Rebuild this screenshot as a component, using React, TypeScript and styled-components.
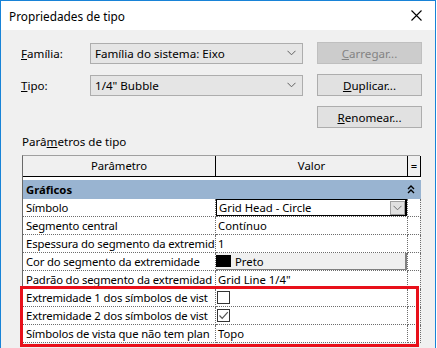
import { FC } from "react";
import styled, { createGlobalStyle } from "styled-components";

const GlobalStyle = createGlobalStyle`
  html, body {
    margin: 0;
    padding: 0;
    background: #ffffff;
  }
  body {
    font-family: "Noto Sans", "Open Sans", sans-serif;
    font-size: 11.6px;
    color: #000000;
  }
`;

const Chevron: FC<{ color?: string }> = ({ color = "#606060" }) => (
  <svg width="9" height="6" viewBox="0 0 9 6">
    <path d="M0.5 0.8 L4.5 4.8 L8.5 0.8" fill="none" stroke={color} strokeWidth="1" />
  </svg>
);

const CloseIcon: FC = () => (
  <svg width="11" height="11" viewBox="0 0 11 11">
    <path d="M0.5 0.5 L10.5 10.5 M10.5 0.5 L0.5 10.5" stroke="#000" strokeWidth="1.1" />
  </svg>
);

const CollapseIcon: FC = () => (
  <svg width="8" height="9" viewBox="0 0 8 9">
    <path d="M1 4 L4 1 L7 4 M1 8 L4 5 L7 8" fill="none" stroke="#000" strokeWidth="1.4" />
  </svg>
);

const CheckIcon: FC = () => (
  <svg width="11" height="11" viewBox="0 0 11 11">
    <path d="M1.5 5.5 L4.2 8.3 L9.8 2.2" fill="none" stroke="#555" strokeWidth="1.2" />
  </svg>
);

interface IParam {
  name: string;
  value: "text" | "combo" | "color" | "checkbox";
  text?: string;
  checked?: boolean;
}

// names as the narrow column shows them
const params: IParam[] = [
  { name: "Símbolo", value: "combo", text: "Grid Head - Circle" },
  { name: "Segmento central", value: "text", text: "Contínuo" },
  { name: "Espessura do segmento da extremid", value: "text", text: "1" },
  { name: "Cor do segmento da extremidade", value: "color", text: "Preto" },
  { name: "Padrão do segmento da extremidad", value: "text", text: "Grid Line 1/4\"" },
  { name: "Extremidade 1 dos símbolos de vist", value: "checkbox", checked: false },
  { name: "Extremidade 2 dos símbolos de vist", value: "checkbox", checked: true },
  { name: "Símbolos de vista que não tem plan", value: "text", text: "Topo" },
];

const App: FC = () => {
  return (
    <>
      <GlobalStyle />
      <Window>
        <TitleBar>
          <Title>Propriedades de tipo</Title>
          <CloseButton>
            <CloseIcon />
          </CloseButton>
        </TitleBar>
        <Body>
          <FormRow>
            <Label>
              <u>F</u>amília:
            </Label>
            <Combo>
              <span>Família do sistema: Eixo</span>
              <Chevron />
            </Combo>
            <Button $disabled>
              <u>C</u>arregar...
            </Button>
          </FormRow>
          <FormRow>
            <Label>
              <u>T</u>ipo:
            </Label>
            <Combo>
              <span>1/4" Bubble</span>
              <Chevron />
            </Combo>
            <Button>
              <u>D</u>uplicar...
            </Button>
          </FormRow>
          <FormRow>
            <Spacer />
            <Button>
              <u>R</u>enomear...
            </Button>
          </FormRow>

          <SectionLabel>
            Parâ<u>m</u>etros de tipo
          </SectionLabel>

          <TableWrap>
            <Grid>
              <HeadCell>Parâmetro</HeadCell>
              <HeadCell>Valor</HeadCell>
              <HeadCell>=</HeadCell>

              <GroupCell>
                <span>Gráficos</span>
                <CollapseIcon />
              </GroupCell>

              {params.map((p) => (
                <Row key={p.name}>
                  <NameCell>
                    <Clip>{p.name}</Clip>
                  </NameCell>
                  <ValueCell>
                    {p.value === "text" && <CellText>{p.text}</CellText>}
                    {p.value === "combo" && (
                      <CellCombo>
                        <CellText>{p.text}</CellText>
                        <DropButton>
                          <Chevron color="#707070" />
                        </DropButton>
                      </CellCombo>
                    )}
                    {p.value === "color" && (
                      <ColorButton>
                        <Swatch />
                        <span>{p.text}</span>
                      </ColorButton>
                    )}
                    {p.value === "checkbox" && (
                      <Checkbox>{p.checked && <CheckIcon />}</Checkbox>
                    )}
                  </ValueCell>
                  <EqCell />
                </Row>
              ))}
            </Grid>
            <Highlight />
          </TableWrap>
        </Body>
      </Window>
    </>
  );
};

const Window = styled.div`
  width: 436px;
  height: 348px;
  box-sizing: border-box;
  border: 1px solid #1883d7;
  border-bottom: none;
  background: #f0f0f0;
  overflow: hidden;
  display: flex;
  flex-direction: column;
`;

const TitleBar = styled.div`
  height: 29px;
  background: #ffffff;
  display: flex;
  align-items: center;
  justify-content: space-between;
  padding: 0 9px 0 8px;
  flex-shrink: 0;
`;

const Title = styled.span`
  font-size: 11.8px;
  color: #000;
`;

const CloseButton = styled.div`
  width: 16px;
  height: 16px;
  display: flex;
  align-items: center;
  justify-content: center;
  margin-right: 2px;
`;

const Body = styled.div`
  padding: 12px 0 0 20px;
  display: flex;
  flex-direction: column;
`;

const FormRow = styled.div`
  display: flex;
  align-items: center;
  height: 22px;
  margin-bottom: 10px;

  &:nth-child(3) {
    margin-bottom: 0;
  }
`;

const Label = styled.label`
  width: 69px;
  flex-shrink: 0;
`;

const Spacer = styled.div`
  width: 296px;
  flex-shrink: 0;
`;

const Combo = styled.div`
  width: 213px;
  height: 21px;
  box-sizing: border-box;
  border: 1px solid #adadad;
  background: #e5e5e5;
  display: flex;
  align-items: center;
  justify-content: space-between;
  padding: 0 6px 0 4px;
  margin-right: 14px;
  flex-shrink: 0;
`;

const Button = styled.div<{ $disabled?: boolean }>`
  width: 105px;
  height: 22px;
  box-sizing: border-box;
  border: 1px solid ${(p) => (p.$disabled ? "#bfbfbf" : "#adadad")};
  background: ${(p) => (p.$disabled ? "#cccccc" : "#e1e1e1")};
  color: ${(p) => (p.$disabled ? "#838383" : "#000")};
  display: flex;
  align-items: center;
  justify-content: center;
  flex-shrink: 0;
`;

const SectionLabel = styled.div`
  margin-top: 5px;
  margin-bottom: 5px;
  height: 17px;
  line-height: 17px;
  padding-left: 1px;
`;

const TableWrap = styled.div`
  position: relative;
  margin-left: 1px;
  width: 398px;
  font-size: 11.3px;
`;

const Grid = styled.div`
  display: grid;
  grid-template-columns: 193px 192px 13px;
  border-top: 1px solid #a0a0a0;
  border-left: 1px solid #696969;
  background: #ffffff;
`;

const HeadCell = styled.div`
  height: 21px;
  box-sizing: border-box;
  background: #f0f0f0;
  border-bottom: 1px solid #000;
  border-right: 1px solid #000;
  display: flex;
  align-items: center;
  justify-content: center;
  padding-bottom: 1px;
`;

const GroupCell = styled.div`
  grid-column: 1 / 4;
  height: 22px;
  box-sizing: border-box;
  border-top: 3px solid #ffffff;
  background: #99b4d1;
  font-weight: bold;
  display: flex;
  align-items: center;
  justify-content: space-between;
  padding: 0 6px 0 3px;
`;

const Row = styled.div`
  display: contents;
`;

const BaseCell = styled.div`
  height: 18px;
  box-sizing: border-box;
  border-bottom: 1px dotted #6d6d6d;
  border-right: 1px dotted #6d6d6d;
  display: flex;
  align-items: center;
  overflow: hidden;
  white-space: nowrap;
`;

const NameCell = styled(BaseCell)`
  padding-left: 3px;
`;

const Clip = styled.span`
  display: block;
  width: 100%;
  overflow: hidden;
  white-space: nowrap;
  letter-spacing: -0.15px;
`;

const ValueCell = styled(BaseCell)`
  position: relative;
`;

const EqCell = styled(BaseCell)``;

const CellText = styled.span`
  padding-left: 2px;
`;

const CellCombo = styled.div`
  width: 100%;
  height: 18px;
  box-sizing: border-box;
  border: 1px solid #000;
  border-right-width: 2px;
  border-bottom-width: 2px;
  display: flex;
  align-items: center;
  justify-content: space-between;
  margin-top: 1px;
`;

const DropButton = styled.div`
  width: 15px;
  height: 14px;
  box-sizing: border-box;
  background: #e1e1e1;
  border: 1px solid #a0a0a0;
  display: flex;
  align-items: center;
  justify-content: center;
`;

const ColorButton = styled.div`
  width: 100%;
  height: 17px;
  box-sizing: border-box;
  background: #f0f0f0;
  border-right: 2px solid #808080;
  border-bottom: 1px solid #808080;
  display: flex;
  align-items: center;
  gap: 4px;
`;

const Swatch = styled.div`
  width: 15px;
  height: 12px;
  background: #000;
`;

const Checkbox = styled.div`
  width: 13px;
  height: 13px;
  box-sizing: border-box;
  border: 1px solid #333;
  background: #fff;
  margin-left: 1px;
  display: flex;
  align-items: center;
  justify-content: center;
`;

const Highlight = styled.div`
  position: absolute;
  left: -2px;
  top: 131px;
  width: 399px;
  height: 61px;
  box-sizing: border-box;
  border: 3px solid #e8101a;
  pointer-events: none;
`;

export default App;
